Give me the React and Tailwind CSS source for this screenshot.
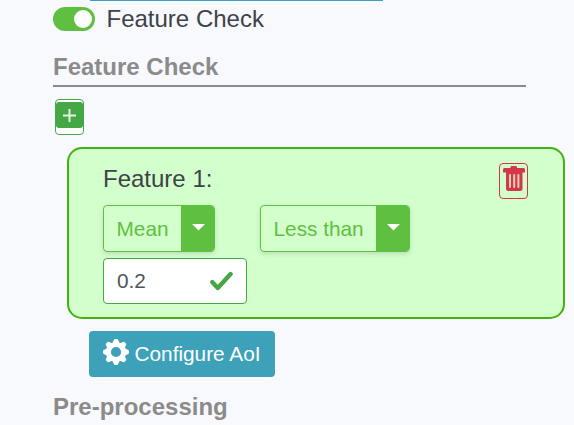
function SplitButton({ label, className }) {
  return (
    <div
      className={`flex h-[47px] overflow-hidden rounded-[4px] border border-[#5fbf40] text-[20.8px] text-[#5fbf40] shadow-[0_2px_5px_rgba(0,0,0,0.12)] ${className}`}
    >
      <span className="flex flex-1 items-center whitespace-nowrap pl-[12.5px]">{label}</span>
      <span className="flex w-[33px] justify-center bg-[#5fbf40] pl-px pt-[18px]">
        <svg width="13" height="7" viewBox="0 0 13 7">
          <path d="M0 0H13L6.5 6.5Z" fill="#fff" />
        </svg>
      </span>
    </div>
  );
}

function TrashIcon() {
  return (
    <svg width="22" height="26" viewBox="0 0 22 26">
      <path
        d="M7.5 2V1.2Q7.5 0 8.7 0H12.8Q14 0 14 1.2V2H20.6Q22 2 22 3.5V6.5H19.5V22.5Q19.5 25 17 25H5.5Q3 25 3 22.5V6.5H0V3.5Q0 2 1.4 2Z"
        fill="#d3384a"
      />
      <path d="M7 9V21M11.2 9V21M15.4 9V21" stroke="#e3d0b4" strokeWidth="2" strokeLinecap="round" />
    </svg>
  );
}

const toothAngles = [0, 45, 90, 135];

function GearIcon() {
  return (
    <svg className="mb-[4px] shrink-0" width="26" height="26" viewBox="-13 -13 26 26">
      <circle r="7.6" fill="none" stroke="#fff" strokeWidth="5" />
      {toothAngles.map((angle) => (
        <path
          key={angle}
          d="M-3.8 -8L-2.2 -12Q-1.8 -13 -0.8 -13H0.8Q1.8 -13 2.2 -12L3.8 -8ZM-3.8 8L-2.2 12Q-1.8 13 -0.8 13H0.8Q1.8 13 2.2 12L3.8 8Z"
          fill="#fff"
          transform={`rotate(${angle})`}
        />
      ))}
    </svg>
  );
}

export default function App() {
  return (
    <div className="h-[425px] w-[574px] overflow-hidden bg-[#f8f9fc] font-['Liberation_Sans',Arial,sans-serif] text-[#3f4248]">
      <div className="ml-[90px] h-px w-[293px] bg-[#3da2b9]" />

      <div className="mt-[6px] flex h-[24px] items-center pl-[53px]">
        <div className="flex h-[24px] w-[42px] items-center justify-end rounded-full bg-[#5fbf40] pr-[3px]">
          <div className="size-[18px] rounded-full bg-white" />
        </div>
        <span className="ml-[11.5px] text-[24px] leading-[24px]">Feature Check</span>
      </div>

      <h2 className="ml-[53px] mt-[20px] h-[36px] w-[473px] border-b-2 border-[#888a8b] text-[24px] font-bold leading-[32px] text-[#8b8b8b]">
        Feature Check
      </h2>

      <button className="ml-[55px] mt-[12px] flex h-[36px] w-[29px] items-start justify-center rounded-[4px] border border-[#45a745] bg-white pt-[2px]">
        <span className="flex h-[26px] w-[27px] items-center justify-center rounded-[3px] bg-[#45a745]">
          <svg width="13" height="13" viewBox="0 0 13 13">
            <path d="M6.5 0V13M0 6.5H13" stroke="#e5f5e5" strokeWidth="1.9" />
          </svg>
        </span>
      </button>

      <section className="ml-[67px] mt-[12px] h-[172px] w-[498px] rounded-[15px] border-2 border-[#43b10e] bg-[#d3ffcd] pl-[34px] pr-[35px]">
        <div className="flex h-[56px] justify-between">
          <span className="pt-[16px] text-[24px] leading-[28px]">Feature 1:</span>
          <button className="mt-[14px] flex h-[36px] w-[29px] justify-center rounded-[4px] border border-[#d3384a] pt-[2px]">
            <TrashIcon />
          </button>
        </div>
        <div className="flex">
          <SplitButton label="Mean" className="w-[112px]" />
          <SplitButton label="Less than" className="ml-[45px] w-[150px]" />
        </div>
        <div className="mt-[6px] flex h-[46px] w-[144px] items-center justify-between rounded-[4px] border border-[#45a745] bg-white px-[13px] text-[20.8px] text-[#50555d]">
          <span>0.2</span>
          <svg width="23" height="20" viewBox="0 0 23 20">
            <path d="M2.4 11.2L7.8 17L20.6 3" fill="none" stroke="#45a745" strokeWidth="4.4" strokeLinecap="round" strokeLinejoin="round" />
          </svg>
        </div>
      </section>

      <button className="ml-[89px] mt-[12px] flex h-[46px] w-[186px] items-center rounded-[4px] bg-[#3da2b9] pl-[14px] text-[20.8px] text-white">
        <GearIcon />
        <span className="ml-[5.5px] whitespace-nowrap">Configure AoI</span>
      </button>

      <h2 className="ml-[53px] mt-[14px] text-[24px] font-bold leading-[32px] text-[#8b8b8b]">Pre-processing</h2>
    </div>
  );
}
